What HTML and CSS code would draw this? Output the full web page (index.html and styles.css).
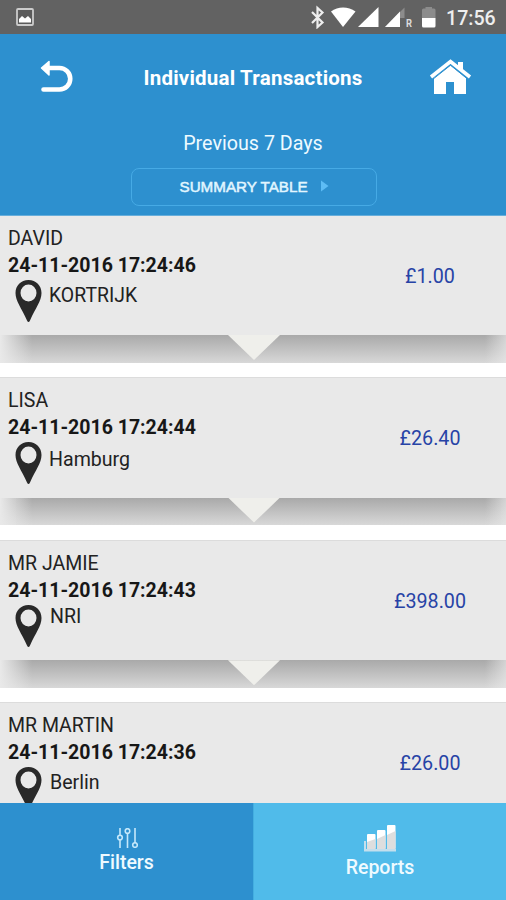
FILE: index.html
```html
<!DOCTYPE html>
<html lang="en">
<head>
<meta charset="utf-8">
<title>Individual Transactions</title>
<link rel="stylesheet" href="styles.css">
</head>
<body>
<svg class="defs" width="0" height="0" aria-hidden="true">
  <symbol id="pin" viewBox="0 0 26 42"><path fill-rule="evenodd" d="M13 0C5.400 0 0 5.600 0 13c0 8 6 15 11.500 27.500q1.500 3 3 0C20 28 26 21 26 13 26 5.600 20.600 0 13 0zM13 4.500a8 8.500 0 1 1 0 17 8 8.500 0 0 1 0-17z"/></symbol>
</svg>
<div class="screen">
  <div class="status">
    <svg class="picture" width="18" height="18" viewBox="0 0 18 18"><rect x="1" y="1" width="16" height="16" rx="1" fill="#5b5b5b" stroke="#ccc" stroke-width="1.800"/><path d="M3 14.500V11l3-3 3 2.500L12 8l3 3v3.500z" fill="#fff"/></svg>
    <svg class="signals" width="127" height="24" viewBox="310 5 127 24">
      <path d="M312 12l10.500 10.500-5 4.500V8l5 4.500L312 23" fill="none" stroke="#eee" stroke-width="2.200"/>
      <path d="M331 11.500C338 6 348 6 355.500 11.500L343 27z" fill="#fff"/>
      <path d="M378.500 7v20H358z" fill="#fff"/>
      <path d="M404.500 7.500V18H400v9H385z" fill="#8c8c8c"/><path d="M400 11.500V27h-15z" fill="#fff"/>
      <text x="406" y="27" class="roaming" textLength="6" lengthAdjust="spacingAndGlyphs">R</text>
      <path d="M422 10q0-1.500 1.500-1.500h2V7h6.500v1.500h2q1.500 0 1.500 1.500v8H422z" fill="#8c8c8c"/><path d="M422 18h13.500v8q0 1.500-1.500 1.500h-10.500q-1.500 0-1.500-1.500z" fill="#fff"/>
    </svg>
    <span class="clock">17:56</span>
  </div>
  <header class="header">
    <div class="titlebar">
      <svg class="back" width="34" height="36" viewBox="40 59 34 36"><path d="M43.500 89.500H59.500a10.500 10.500 0 0 0 0-21.500H48" fill="none" stroke="#fff" stroke-width="4.600" stroke-linecap="round"/><path d="M41.500 68l7.500-6.500V75z" fill="#fff" stroke="#fff" stroke-width="1.500" stroke-linejoin="round"/></svg>
      <h1 class="title">Individual Transactions</h1>
      <svg class="home" width="44" height="38" viewBox="428 58 44 38"><path d="M431 77l19.500-15.500L470 77" fill="none" stroke="#fff" stroke-width="3.600"/><path d="M458 62h5v9l-5-4z" fill="#fff"/><path d="M434 78l16.500-12.500L466 78v16h-12V82h-8v12h-12z" fill="#fff"/><path d="M433 79.200l17.500-14L467.500 79" fill="none" stroke="#2d90cf"/></svg>
    </div>
    <div class="period">Previous 7 Days</div>
    <a class="summary"><span>SUMMARY TABLE</span><svg width="8" height="12" viewBox="0 0 8 12"><path d="M0 0.500L7.500 6 0 11.500z" fill="#5dbcf5"/></svg></a>
  </header>
  <main class="list">
    <article class="item"><div class="card"><div class="name">DAVID</div><div class="date">24-11-2016 17:24:46</div><div class="place"><svg class="pin"><use href="#pin"/></svg><span class="city kortrijk">KORTRIJK</span></div><div class="amount">£1.00</div></div><div class="fold"><i class="notch"></i></div></article>
    <article class="item"><div class="card"><div class="name">LISA</div><div class="date">24-11-2016 17:24:44</div><div class="place"><svg class="pin"><use href="#pin"/></svg><span class="city">Hamburg</span></div><div class="amount">£26.40</div></div><div class="fold"><i class="notch"></i></div></article>
    <article class="item"><div class="card"><div class="name">MR JAMIE</div><div class="date">24-11-2016 17:24:43</div><div class="place"><svg class="pin"><use href="#pin"/></svg><span class="city nri">NRI</span></div><div class="amount">£398.00</div></div><div class="fold"><i class="notch"></i></div></article>
    <article class="item"><div class="card"><div class="name">MR MARTIN</div><div class="date">24-11-2016 17:24:36</div><div class="place"><svg class="pin"><use href="#pin"/></svg><span class="city berlin">Berlin</span></div><div class="amount">£26.00</div></div><div class="fold"><i class="notch"></i></div></article>
  </main>
  <nav class="tabs">
    <a class="tab filters"><svg width="22" height="20" viewBox="0 0 22 20"><g fill="none" stroke="#c5e8fb" stroke-width="1.600"><path d="M4 0v7M4 12v8M11.500 5v15M19 0v15"/><circle cx="4" cy="9.500" r="2.300"/><circle cx="11.500" cy="3" r="2.300"/><circle cx="19" cy="17" r="2.300"/></g></svg><span>Filters</span></a>
    <a class="tab reports"><svg width="32" height="28" viewBox="0 0 32 28"><path d="M0 17h2v8h30v2.500H0z" fill="#c4dfed"/><g fill="#fff"><rect x="3" y="10" width="8.500" height="15" rx="1"/><rect x="13" y="6" width="8.500" height="19" rx="1"/><rect x="23" y="1" width="8.500" height="24" rx="1"/></g><path d="M3 18l8.500-3v10H3zM13 15l8.500-4v14H13zM23 11l8.500-4v18H23z" fill="#dedede"/></svg><span>Reports</span></a>
  </nav>
</div>
</body>
</html>
```
FILE: styles.css
```css
* { box-sizing: border-box; }
body { margin: 0; font-family: Roboto, sans-serif; }
svg { display: block; flex: none; }
.defs { position: absolute; }
.screen { width: 506px; height: 900px; overflow: hidden; display: flex; flex-direction: column; background: #fff; }
.status { height: 34px; flex: none; background: #626262; display: flex; align-items: center; padding: 0 10px 0 16px; color: #fff; }
.signals { margin-left: auto; }
.roaming { font: bold 11px Roboto, sans-serif; fill: #ddd; }
.clock { width: 50px; margin-left: 9px; padding-top: 3px; font-size: 19.600px; font-weight: 500; line-height: 34px; white-space: nowrap; color: #eee; }
.header { height: 182px; flex: none; background: #2d90cf; border-bottom: 1px solid #67aedb; display: flex; flex-direction: column; align-items: center; color: #fff; position: relative; z-index: 1; }
.titlebar { width: 100%; height: 86px; display: flex; align-items: center; justify-content: space-between; padding: 0 34px 0 40px; }
.title { margin: 2px 0 0 4px; font-size: 20.500px; font-weight: 700; letter-spacing: 0.220px; line-height: 24px; white-space: nowrap; }
.period { height: 24px; margin-top: 12px; font-size: 19.700px; line-height: 24px; color: #eefaff; white-space: nowrap; }
.summary { width: 246px; height: 38px; margin-top: 12px; margin-left: 1px; border: 1.500px solid #46aae5; border-radius: 8px; display: flex; align-items: center; padding: 0 0 2px 48px; gap: 13px; font: 15.200px "Liberation Sans", sans-serif; -webkit-text-stroke: 0.500px #e2f6ff; color: #e2f6ff; white-space: nowrap; }
.list { flex: 1; min-height: 0; margin-top: -1.500px; overflow: hidden; }
.item { height: 162.600px; }
.card { position: relative; height: 120.500px; padding: 11px 8px 0; background: #e9e9e9; border-top: 1px solid #dcdcdc; color: #171717; }
.name { height: 25px; font-size: 19.500px; line-height: 24px; color: #222; }
.date { height: 28px; font-size: 19.500px; font-weight: 700; line-height: 27px; }
.place { display: flex; padding-left: 7px; }
.pin { width: 27px; height: 42px; fill: #292929; }
.city { margin: 6px 0 0 7px; font-size: 19.600px; line-height: 24px; color: #222; }
.kortrijk { margin-top: 4px; font-size: 19.400px; }
.nri { margin: 0 0 0 8px; }
.berlin { margin: 4px 0 0 8px; }
.amount { position: absolute; right: 5px; width: 142px; top: 49px; text-align: center; font-size: 19.700px; line-height: 24px; color: #2743a6; }
.fold { height: 27.500px; background: linear-gradient(90deg, #e9e9e9 0, rgba(233,233,233,0) 32px, rgba(233,233,233,0) 485px, rgba(233,233,233,.65)), linear-gradient(#a9a9a9, #d8d8d8); display: flex; justify-content: center; }
.notch { width: 52px; height: 25px; margin-left: 2px; background: #efefeb; clip-path: polygon(0 0, 100% 0, 50% 100%); }
.tabs { height: 97.500px; flex: none; display: grid; grid-template-columns: 1fr 1fr; }
.tab { display: flex; flex-direction: column; align-items: center; font-size: 19.500px; font-weight: 500; line-height: 24px; color: #effaff; }
.filters { background: #2d90cf; padding-top: 25.500px; gap: 3px; }
.reports { background: #50bbea; padding-top: 21.500px; gap: 4px; border-left: 1px solid #43aee0; }
```
